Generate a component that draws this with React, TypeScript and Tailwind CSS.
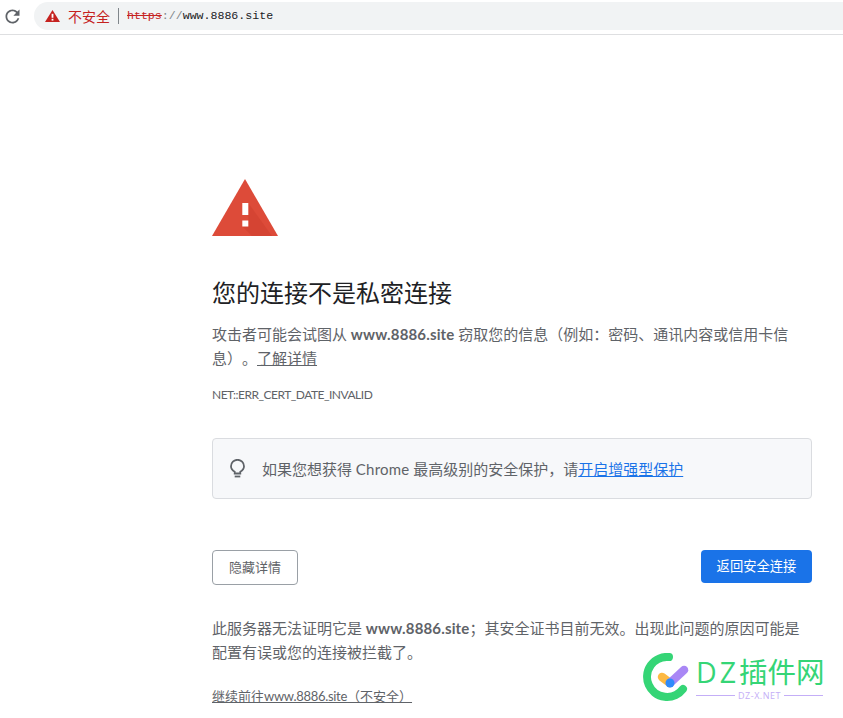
import React from 'react';

const cjk = "font-['Lato','Noto_Sans_CJK_SC',sans-serif] [text-spacing-trim:space-all]";

function WarningTriangle() {
  return (
    <svg width="66" height="57" viewBox="0 0 66 57" className="block">
      <path d="M33 0 L66 57 L0 57 Z" fill="#dd4b39" />
      <path d="M36.300 24 L60 57 L40 57 L30.300 47.500 L36.300 47.500 Z" fill="#c53929" opacity="0.35" />
      <rect x="30.300" y="24" width="6" height="12" fill="#fff" />
      <rect x="30.300" y="41.500" width="6" height="6" fill="#fff" />
    </svg>
  );
}

function SmallWarning() {
  return (
    <svg width="15" height="12" viewBox="0 0 15 12">
      <path d="M7.500 0 L15 12 L0 12 Z" fill="#c5221f" />
      <rect x="6.600" y="3.800" width="1.800" height="4" fill="#fff" />
      <rect x="6.600" y="8.800" width="1.800" height="1.800" fill="#fff" />
    </svg>
  );
}

function ReloadIcon() {
  return (
    <svg width="21" height="21" viewBox="0 0 24 24" fill="#5f6368">
      <path d="M17.65 6.35C16.2 4.9 14.21 4 12 4c-4.42 0-7.99 3.58-7.99 8s3.57 8 7.99 8c3.73 0 6.84-2.55 7.73-6h-2.08c-.82 2.33-3.04 4-5.65 4-3.31 0-6-2.69-6-6s2.690-6 6-6c1.660 0 3.140.69 4.220 1.780L13 11h7V4l-2.350 2.350z" />
    </svg>
  );
}

function Bulb() {
  return (
    <svg width="15" height="19" viewBox="0 0 15 19" fill="none" stroke="#5f6368" strokeWidth="1.800">
      <path d="M4.700 12.800 C2.400 11.500 1 9.600 1 7.300 A6.500 6.500 0 0 1 14 7.300 C14 9.600 12.600 11.500 10.300 12.800 V14.500 H4.700 Z" />
      <path d="M4.700 17.500 H10.300" />
    </svg>
  );
}

function Watermark() {
  return (
    <div className="absolute left-[643px] top-[653px] flex items-start gap-[3px]">
      <svg width="50" height="48" viewBox="0 0 50 48">
        <path d="M26 4 A20 20 0 1 0 40 36" fill="none" stroke="#35d576" strokeWidth="8" strokeLinecap="round" />
        <path d="M19 24 L27 30" stroke="#fdb943" strokeWidth="8.500" strokeLinecap="round" />
        <path d="M27 30 L41 17" stroke="#a987f5" strokeWidth="8.500" strokeLinecap="round" />
        <circle cx="27" cy="30" r="4.500" fill="#2f8bfb" />
      </svg>
      <div className="flex w-[127px] flex-col pt-[1px]">
        <span className="text-[28.5px] leading-[36px] whitespace-nowrap text-[#35d576] font-['Open_Sans','Noto_Sans_CJK_SC',sans-serif]">
          <span className="tracking-[3px]">DZ</span>插件网
        </span>
        <div className="flex items-center gap-[3px]">
          <span className="h-px flex-1 bg-[#c4aef7]" />
          <span className="text-[9px] leading-[11px] text-[#c4aef7] tracking-[0.5px] font-['Open_Sans',sans-serif]">DZ-X.NET</span>
          <span className="h-px flex-1 bg-[#c4aef7]" />
        </div>
      </div>
    </div>
  );
}

export default function App() {
  return (
    <div className={`relative h-[718px] w-[843px] overflow-hidden bg-white ${cjk}`}>
      {/* browser toolbar */}
      <div className="flex h-[35px] items-start border-b border-[#dedfe1] bg-white pt-[2px]">
        <div className="flex h-[28px] w-[34px] items-center pl-[2px]">
          <ReloadIcon />
        </div>
        <div className="flex h-[28px] flex-1 items-center rounded-l-full bg-[#f1f3f4] pl-[11px]">
          <SmallWarning />
          <span className="ml-[8px] text-[14px] text-[#c5221f]">不安全</span>
          <span className="mx-[8px] h-[16px] w-px bg-[#80868b]" />
          <span className="text-[11.6px] font-['Liberation_Mono',monospace] text-[#202124]">
            <span className="text-[#c5221f] line-through">https</span>
            <span className="text-[#80868b]">://</span>
            www.8886.site
          </span>
        </div>
      </div>

      {/* interstitial body */}
      <main className="ml-[212px] w-[600px] pt-[144px] text-[#5f6368]">
        <WarningTriangle />
        <h1 className="mt-[41px] text-[24px] leading-[32px] font-normal text-[#202124]">您的连接不是私密连接</h1>
        <p className="mt-[13px] text-[15px] leading-[24px]">
          攻击者可能会试图从 <strong className="font-bold tracking-[0.15px]">www.8886.site</strong> 窃取您的信息（例如：密码、通讯内容或信用卡信息）。<a className="underline">了解详情</a>
        </p>
        <div className="mt-[17px] text-[12px] leading-[16px] tracking-[-0.5px]">NET::ERR_CERT_DATE_INVALID</div>

        <div className="mt-[35px] flex h-[61px] items-center rounded-[4px] border border-[#dadce0] bg-[#f7f8fa] pl-[17px]">
          <Bulb />
          <span className="ml-[17px] pt-[2px] text-[15px]">
            如果您想获得 <span className="tracking-[0.2px]">Chrome</span> 最高级别的安全保护，请<a className="text-[#1a73e8] underline">开启增强型保护</a>
          </span>
        </div>

        <div className="mt-[51px] flex items-start justify-between">
          <button className="h-[35px] w-[86px] rounded-[4px] border border-[#9aa0a6] bg-white text-[13px] text-[#5f6368]">隐藏详情</button>
          <button className="h-[33px] w-[111px] rounded-[4px] bg-[#1a73e8] pt-[1px] text-[13.300px] text-white">返回安全连接</button>
        </div>

        <p className="mt-[31px] text-[15px] leading-[24px]">
          此服务器无法证明它是 <strong className="font-bold tracking-[0.15px]">www.8886.site</strong>；其安全证书目前无效。出现此问题的原因可能是配置有误或您的连接被拦截了。
        </p>
        <a className="mt-[20px] block text-[13px] leading-[24px] underline whitespace-nowrap">
          继续前往<span className="tracking-[-0.3px]">www.8886.site</span>（不安全）
        </a>
      </main>

      <Watermark />
    </div>
  );
}
